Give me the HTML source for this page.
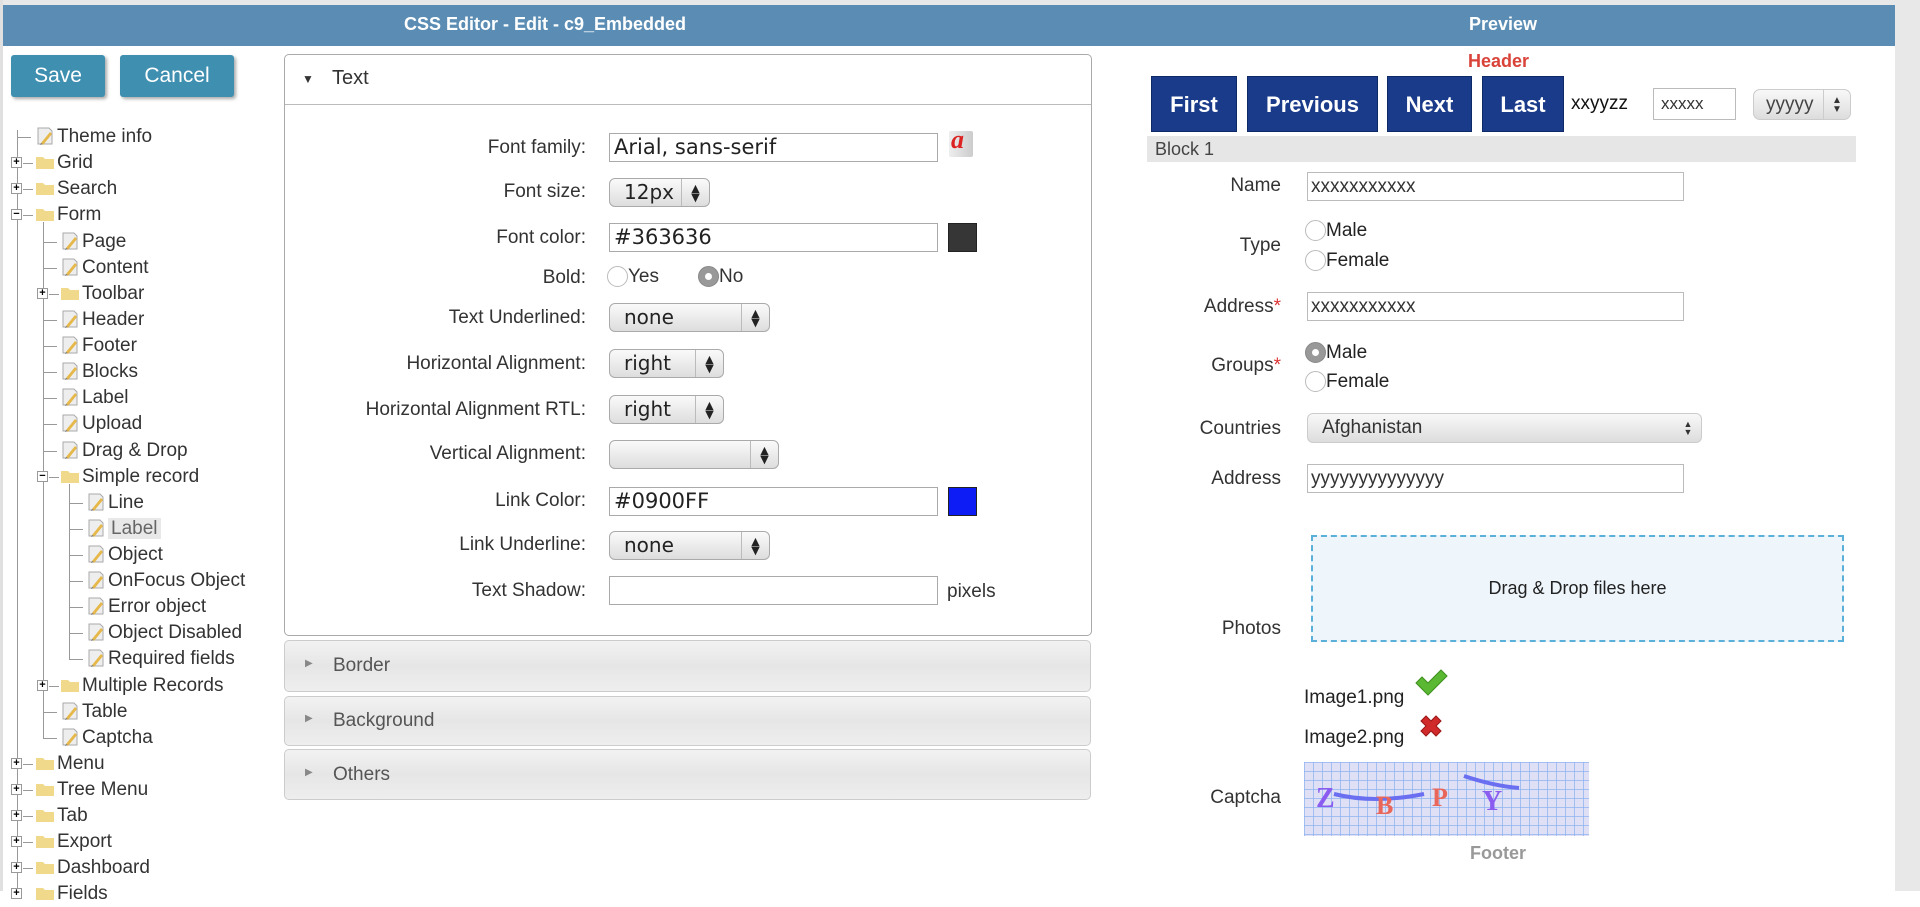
<!DOCTYPE html>
<html><head><meta charset="utf-8">
<style>
*{box-sizing:border-box;margin:0;padding:0}
body{width:1920px;height:891px;overflow:hidden;background:#fff;font-family:"Liberation Sans",sans-serif;color:#333;position:relative}
.a{position:absolute}
.bar{left:3px;top:5px;width:1892px;height:41px;background:#5b8db4}
.bt{color:#fff;font-weight:bold;font-size:18px;top:14px}
.btn{top:55px;height:42px;background:#3f8fb0;color:#fff;font-size:21px;text-align:center;line-height:42px;border-radius:3px;box-shadow:2px 2px 3px #aaa}
.ti{position:absolute;height:26px;line-height:26px;font-size:19px;color:#333;white-space:nowrap}
.ic{display:inline-block;width:20px;height:20px;vertical-align:-4px;margin-right:2px}
.vl{position:absolute;width:1px;background:#999}
.hl{position:absolute;height:1px;background:#999}
.pb{position:absolute;width:11px;height:11px;border:1px solid #999;background:#fff;font-size:11px;line-height:9px;text-align:center;color:#000;font-weight:bold}
.lbl{position:absolute;right:1334px;font-size:19px;text-align:right;white-space:nowrap;color:#333}
.inp{position:absolute;left:609px;width:329px;height:29px;border:1px solid #aaa;font-size:21px;padding-left:4px;line-height:27px;color:#222;font-family:"DejaVu Sans","Liberation Sans",sans-serif}
.sel{position:absolute;left:609px;height:29px;border:1px solid #aaa;border-radius:6px;background:linear-gradient(#fafafa,#ddd);font-size:20px;padding-left:14px;line-height:27px;color:#222;font-family:"DejaVu Sans","Liberation Sans",sans-serif}
.sel i{position:absolute;right:0;top:0;width:28px;height:27px;border-left:1px solid #bbb;font-style:normal;font-size:11px;line-height:9px;text-align:center;padding-top:5px}
.acc{position:absolute;left:284px;width:807px;border:1px solid #ccc;border-radius:5px;background:linear-gradient(#f2f2f2,#e6e6e6 50%,#eee);font-size:19px;color:#555}
.rl{position:absolute;right:639px;font-size:19px;color:#333;text-align:right}
.rin{position:absolute;left:1307px;width:377px;height:29px;border:1px solid #bbb;font-size:19px;padding-left:3px;line-height:27px;color:#333}
.rad{display:inline-block;width:21px;height:21px;border:1px solid #bbb;border-radius:50%;vertical-align:-5px;background:#fff}
.nb{position:absolute;top:76px;height:56px;background:#1a3a8a;color:#fff;font-weight:bold;font-size:22px;text-align:center;line-height:56px;border:1px solid #0d2a66}
</style></head><body>
<div class="a" style="left:0;top:0;width:1920px;height:5px;background:#e8e8e8"></div>
<div class="a" style="left:0;top:0;width:3px;height:891px;background:#e0e0e0"></div>
<div class="a" style="left:1895px;top:0;width:25px;height:891px;background:#e8e8e8"></div>
<div class="a bar"></div>
<div class="a bt" style="left:404px">CSS Editor - Edit - c9_Embedded</div>
<div class="a bt" style="left:1469px">Preview</div>

<div class="a btn" style="left:11px;width:94px">Save</div>
<div class="a btn" style="left:120px;width:114px">Cancel</div>

<div class="vl" style="left:17px;top:130px;height:761px"></div>
<div class="vl" style="left:43px;top:222px;height:516px"></div>
<div class="vl" style="left:69px;top:484px;height:175px"></div>
<svg width="0" height="0" style="position:absolute"><defs>
<g id="pg"><path d="M3 2h11l3 3v13H3z" fill="#eee" stroke="#aaa"/><path d="M6 17l9-11 2 2-9 11z" fill="#e6b84a"/><path d="M6 17l-1 2 3-1z" fill="#777"/></g>
<g id="fd"><path d="M1 5h7l2 2h9v10H1z" fill="#f0d98a"/></g>
</defs></svg>
<div class="hl" style="left:17px;top:137px;width:14px"></div>
<div class="ti" style="left:35px;top:124px"><svg class="ic" viewBox="0 0 20 20"><use href="#pg"/></svg>Theme info</div>
<div class="pb" style="left:11px;top:157px">+</div><div class="hl" style="left:23px;top:163px;width:10px"></div>
<div class="ti" style="left:35px;top:150px"><svg class="ic" viewBox="0 0 20 20"><use href="#fd"/></svg>Grid</div>
<div class="pb" style="left:11px;top:183px">+</div><div class="hl" style="left:23px;top:189px;width:10px"></div>
<div class="ti" style="left:35px;top:176px"><svg class="ic" viewBox="0 0 20 20"><use href="#fd"/></svg>Search</div>
<div class="pb" style="left:11px;top:209px">−</div><div class="hl" style="left:23px;top:215px;width:10px"></div>
<div class="ti" style="left:35px;top:202px"><svg class="ic" viewBox="0 0 20 20"><use href="#fd"/></svg>Form</div>
<div class="hl" style="left:43px;top:242px;width:14px"></div><div class="ti" style="left:60px;top:229px"><svg class="ic" viewBox="0 0 20 20"><use href="#pg"/></svg>Page</div>
<div class="hl" style="left:43px;top:268px;width:14px"></div><div class="ti" style="left:60px;top:255px"><svg class="ic" viewBox="0 0 20 20"><use href="#pg"/></svg>Content</div>
<div class="pb" style="left:37px;top:288px">+</div><div class="hl" style="left:49px;top:294px;width:10px"></div><div class="ti" style="left:60px;top:281px"><svg class="ic" viewBox="0 0 20 20"><use href="#fd"/></svg>Toolbar</div>
<div class="hl" style="left:43px;top:320px;width:14px"></div><div class="ti" style="left:60px;top:307px"><svg class="ic" viewBox="0 0 20 20"><use href="#pg"/></svg>Header</div>
<div class="hl" style="left:43px;top:346px;width:14px"></div><div class="ti" style="left:60px;top:333px"><svg class="ic" viewBox="0 0 20 20"><use href="#pg"/></svg>Footer</div>
<div class="hl" style="left:43px;top:372px;width:14px"></div><div class="ti" style="left:60px;top:359px"><svg class="ic" viewBox="0 0 20 20"><use href="#pg"/></svg>Blocks</div>
<div class="hl" style="left:43px;top:398px;width:14px"></div><div class="ti" style="left:60px;top:385px"><svg class="ic" viewBox="0 0 20 20"><use href="#pg"/></svg>Label</div>
<div class="hl" style="left:43px;top:424px;width:14px"></div><div class="ti" style="left:60px;top:411px"><svg class="ic" viewBox="0 0 20 20"><use href="#pg"/></svg>Upload</div>
<div class="hl" style="left:43px;top:451px;width:14px"></div><div class="ti" style="left:60px;top:438px"><svg class="ic" viewBox="0 0 20 20"><use href="#pg"/></svg>Drag &amp; Drop</div>
<div class="pb" style="left:37px;top:471px">−</div><div class="hl" style="left:49px;top:477px;width:10px"></div><div class="ti" style="left:60px;top:464px"><svg class="ic" viewBox="0 0 20 20"><use href="#fd"/></svg>Simple record</div>
<div class="hl" style="left:69px;top:503px;width:14px"></div><div class="ti" style="left:86px;top:490px"><svg class="ic" viewBox="0 0 20 20"><use href="#pg"/></svg>Line</div>
<div class="hl" style="left:69px;top:529px;width:14px"></div><div class="ti" style="left:86px;top:516px"><svg class="ic" viewBox="0 0 20 20"><use href="#pg"/></svg><span style="background:#e8e8e8;color:#666;padding:0 3px">Label</span></div>
<div class="hl" style="left:69px;top:555px;width:14px"></div><div class="ti" style="left:86px;top:542px"><svg class="ic" viewBox="0 0 20 20"><use href="#pg"/></svg>Object</div>
<div class="hl" style="left:69px;top:581px;width:14px"></div><div class="ti" style="left:86px;top:568px"><svg class="ic" viewBox="0 0 20 20"><use href="#pg"/></svg>OnFocus Object</div>
<div class="hl" style="left:69px;top:607px;width:14px"></div><div class="ti" style="left:86px;top:594px"><svg class="ic" viewBox="0 0 20 20"><use href="#pg"/></svg>Error object</div>
<div class="hl" style="left:69px;top:633px;width:14px"></div><div class="ti" style="left:86px;top:620px"><svg class="ic" viewBox="0 0 20 20"><use href="#pg"/></svg>Object Disabled</div>
<div class="hl" style="left:69px;top:659px;width:14px"></div><div class="ti" style="left:86px;top:646px"><svg class="ic" viewBox="0 0 20 20"><use href="#pg"/></svg>Required fields</div>
<div class="pb" style="left:37px;top:680px">+</div><div class="hl" style="left:49px;top:686px;width:10px"></div><div class="ti" style="left:60px;top:673px"><svg class="ic" viewBox="0 0 20 20"><use href="#fd"/></svg>Multiple Records</div>
<div class="hl" style="left:43px;top:712px;width:14px"></div><div class="ti" style="left:60px;top:699px"><svg class="ic" viewBox="0 0 20 20"><use href="#pg"/></svg>Table</div>
<div class="hl" style="left:43px;top:738px;width:14px"></div><div class="ti" style="left:60px;top:725px"><svg class="ic" viewBox="0 0 20 20"><use href="#pg"/></svg>Captcha</div>
<div class="pb" style="left:11px;top:758px">+</div><div class="hl" style="left:23px;top:764px;width:10px"></div><div class="ti" style="left:35px;top:751px"><svg class="ic" viewBox="0 0 20 20"><use href="#fd"/></svg>Menu</div>
<div class="pb" style="left:11px;top:784px">+</div><div class="hl" style="left:23px;top:790px;width:10px"></div><div class="ti" style="left:35px;top:777px"><svg class="ic" viewBox="0 0 20 20"><use href="#fd"/></svg>Tree Menu</div>
<div class="pb" style="left:11px;top:810px">+</div><div class="hl" style="left:23px;top:816px;width:10px"></div><div class="ti" style="left:35px;top:803px"><svg class="ic" viewBox="0 0 20 20"><use href="#fd"/></svg>Tab</div>
<div class="pb" style="left:11px;top:836px">+</div><div class="hl" style="left:23px;top:842px;width:10px"></div><div class="ti" style="left:35px;top:829px"><svg class="ic" viewBox="0 0 20 20"><use href="#fd"/></svg>Export</div>
<div class="pb" style="left:11px;top:862px">+</div><div class="hl" style="left:23px;top:868px;width:10px"></div><div class="ti" style="left:35px;top:855px"><svg class="ic" viewBox="0 0 20 20"><use href="#fd"/></svg>Dashboard</div>
<div class="pb" style="left:11px;top:888px">+</div><div class="ti" style="left:35px;top:881px"><svg class="ic" viewBox="0 0 20 20"><use href="#fd"/></svg>Fields</div>

<div class="a" style="left:284px;top:54px;width:808px;height:582px;border:1px solid #aaa;border-radius:5px;background:#fff"></div>
<div class="a" style="left:285px;top:104px;width:806px;height:1px;background:#bbb"></div>
<div class="a" style="left:302px;top:72px;font-size:12px;color:#333">▼</div>
<div class="a" style="left:332px;top:67px;font-size:20px;color:#333">Text</div>

<div class="lbl" style="top:137px">Font family:</div>
<div class="inp" style="top:133px">Arial, sans-serif</div>
<div class="a" style="left:949px;top:131px;width:24px;height:26px;background:linear-gradient(90deg,#eee,#ccc);border-radius:2px"><span style="position:absolute;left:2px;top:-6px;color:#d22;font:italic bold 26px 'Liberation Serif',serif">a</span></div>

<div class="lbl" style="top:181px">Font size:</div>
<div class="sel" style="top:178px;width:101px">12px<i>▲<br>▼</i></div>

<div class="lbl" style="top:227px">Font color:</div>
<div class="inp" style="top:223px">#363636</div>
<div class="a" style="left:948px;top:223px;width:29px;height:29px;background:#363636;border:1px solid #222"></div>

<div class="lbl" style="top:267px">Bold:</div>
<div class="a" style="left:607px;top:266px;font-size:19px;color:#333"><span class="rad"></span>Yes</div>
<div class="a" style="left:698px;top:266px;font-size:19px;color:#333"><span class="rad" style="background:#999;border-color:#888;position:relative"><span style="position:absolute;left:6px;top:6px;width:7px;height:7px;border-radius:50%;background:#fff"></span></span>No</div>

<div class="lbl" style="top:307px">Text Underlined:</div>
<div class="sel" style="top:303px;width:161px">none<i>▲<br>▼</i></div>

<div class="lbl" style="top:353px">Horizontal Alignment:</div>
<div class="sel" style="top:349px;width:115px">right<i>▲<br>▼</i></div>

<div class="lbl" style="top:399px">Horizontal Alignment RTL:</div>
<div class="sel" style="top:395px;width:115px">right<i>▲<br>▼</i></div>

<div class="lbl" style="top:443px">Vertical Alignment:</div>
<div class="sel" style="top:440px;width:170px"><i>▲<br>▼</i></div>

<div class="lbl" style="top:490px">Link Color:</div>
<div class="inp" style="top:487px">#0900FF</div>
<div class="a" style="left:948px;top:487px;width:29px;height:29px;background:#0d1cf5;border:1px solid #222"></div>

<div class="lbl" style="top:534px">Link Underline:</div>
<div class="sel" style="top:531px;width:161px">none<i>▲<br>▼</i></div>

<div class="lbl" style="top:580px">Text Shadow:</div>
<div class="inp" style="top:576px"></div>
<div class="a" style="left:947px;top:581px;font-size:19px;color:#333">pixels</div>

<div class="acc" style="top:640px;height:52px"><span style="position:absolute;left:20px;top:17px;font-size:10px;color:#888">▶</span><span style="position:absolute;left:48px;top:14px">Border</span></div>
<div class="acc" style="top:696px;height:50px"><span style="position:absolute;left:20px;top:16px;font-size:10px;color:#888">▶</span><span style="position:absolute;left:48px;top:13px">Background</span></div>
<div class="acc" style="top:749px;height:51px"><span style="position:absolute;left:20px;top:17px;font-size:10px;color:#888">▶</span><span style="position:absolute;left:48px;top:14px">Others</span></div>

<div class="a" style="left:1468px;top:51px;font-size:18px;font-weight:bold;color:#d9433a">Header</div>
<div class="nb" style="left:1151px;width:86px">First</div>
<div class="nb" style="left:1247px;width:131px">Previous</div>
<div class="nb" style="left:1387px;width:85px">Next</div>
<div class="nb" style="left:1482px;width:82px">Last</div>
<div class="a" style="left:1571px;top:93px;font-size:19px;color:#111">xxyyzz</div>
<div class="a" style="left:1653px;top:88px;width:83px;height:32px;border:1px solid #bbb;font-size:17px;padding-left:7px;line-height:30px;color:#333">xxxxx</div>
<div class="a" style="left:1753px;top:89px;width:98px;height:31px;border:1px solid #ccc;border-radius:7px;background:linear-gradient(#f8f8f8,#ddd);font-size:19px;padding-left:12px;line-height:29px;color:#444">yyyyy<span style="position:absolute;right:0;top:0;width:27px;height:29px;border-left:1px solid #ccc;font-size:10px;line-height:9px;text-align:center;padding-top:6px;color:#333">▲<br>▼</span></div>

<div class="a" style="left:1147px;top:136px;width:709px;height:26px;background:#e6e6e6;font-size:18px;color:#444;padding-left:8px;line-height:26px">Block 1</div>

<div class="rl" style="top:175px">Name</div>
<div class="rin" style="top:172px">xxxxxxxxxxx</div>
<div class="rl" style="top:235px">Type</div>
<div class="a" style="left:1305px;top:220px;font-size:19px;color:#222"><span class="rad"></span>Male</div>
<div class="a" style="left:1305px;top:250px;font-size:19px;color:#222"><span class="rad"></span>Female</div>
<div class="rl" style="top:296px">Address<span style="color:#d33">*</span></div>
<div class="rin" style="top:292px">xxxxxxxxxxx</div>
<div class="rl" style="top:355px">Groups<span style="color:#d33">*</span></div>
<div class="a" style="left:1305px;top:342px;font-size:19px;color:#222"><span class="rad" style="position:relative;background:#999;border-color:#888"><span style="position:absolute;left:6px;top:6px;width:7px;height:7px;border-radius:50%;background:#fff"></span></span>Male</div>
<div class="a" style="left:1305px;top:371px;font-size:19px;color:#222"><span class="rad"></span>Female</div>
<div class="rl" style="top:418px">Countries</div>
<div class="a" style="left:1307px;top:413px;width:395px;height:30px;border:1px solid #ccc;border-radius:6px;background:linear-gradient(#f8f8f8,#ddd);font-size:19px;padding-left:14px;line-height:28px;color:#333">Afghanistan<span style="position:absolute;right:0;top:0;width:26px;height:28px;font-size:9px;line-height:8px;text-align:center;padding-top:6px;color:#333">▲<br>▼</span></div>
<div class="rl" style="top:468px">Address</div>
<div class="rin" style="top:464px">yyyyyyyyyyyyyy</div>

<div class="a" style="left:1311px;top:535px;width:533px;height:107px;border:2px dashed #5ab0d8;background:#eef5fb;text-align:center;line-height:103px;font-size:18px;color:#222">Drag &amp; Drop files here</div>
<div class="rl" style="top:618px">Photos</div>

<div class="a" style="left:1304px;top:687px;font-size:19px;color:#222">Image1.png</div>
<svg class="a" style="left:1414px;top:668px" width="34" height="28" viewBox="0 0 34 28"><path d="M2 15l6-6 6 6L27 2l6 6-19 19z" fill="#5bb832" stroke="#3d8f1e" stroke-width="1"/></svg>
<div class="a" style="left:1304px;top:727px;font-size:19px;color:#222">Image2.png</div>
<svg class="a" style="left:1417px;top:712px" width="28" height="28" viewBox="0 0 28 28"><path d="M4 9l5-5 5 5 5-5 5 5-5 5 5 5-5 5-5-5-5 5-5-5 5-5z" fill="#d02a2a" stroke="#9a1616"/></svg>

<div class="rl" style="top:787px">Captcha</div>
<svg class="a" style="left:1304px;top:762px" width="285" height="74" viewBox="0 0 285 74">
<defs><pattern id="gr" width="9" height="9" patternUnits="userSpaceOnUse"><rect width="9" height="9" fill="#dfe0f5"/><path d="M0 0V9M0 0H9" stroke="#8fb3f0" stroke-width="1.5"/></pattern></defs>
<rect width="285" height="74" fill="url(#gr)"/>
<path d="M30 32q40 10 90 0" stroke="#6a6ef0" stroke-width="4" fill="none"/>
<path d="M160 14q30 10 55 12" stroke="#6a6ef0" stroke-width="4" fill="none"/>
<text x="12" y="45" font-family="Liberation Serif" font-weight="bold" font-size="28" fill="#8a5cf0">Z</text>
<text x="72" y="52" font-family="Liberation Serif" font-weight="bold" font-size="26" fill="#e8665a">B</text>
<text x="128" y="44" font-family="Liberation Serif" font-weight="bold" font-size="26" fill="#e8665a">P</text>
<text x="178" y="48" font-family="Liberation Serif" font-weight="bold" font-size="28" fill="#8a5cf0">Y</text>
</svg>
<div class="a" style="left:1470px;top:843px;font-size:18px;font-weight:bold;color:#999">Footer</div>
</body></html>
